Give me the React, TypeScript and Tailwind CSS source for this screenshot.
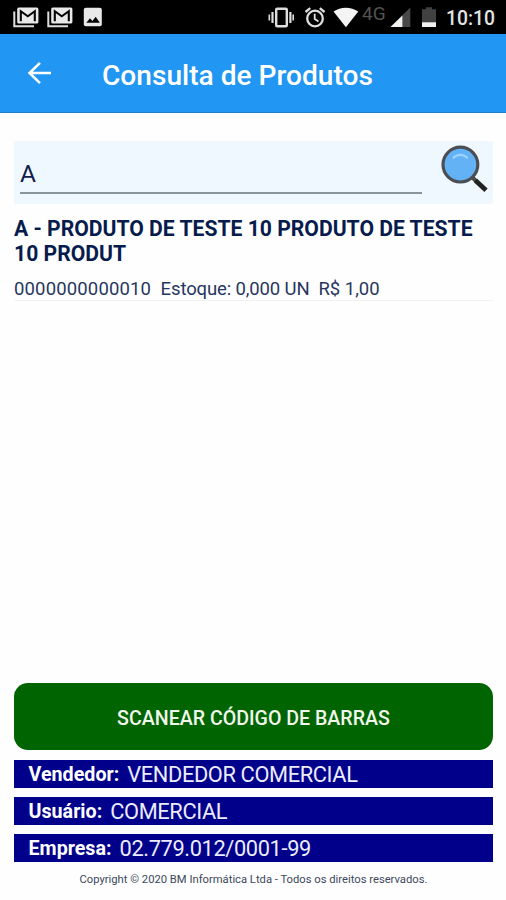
function MailStackIcon() {
  return (
    <svg className="h-[22px] w-[26px] shrink-0" viewBox="0 0 26 22" fill="none">
      <path d="M1.3 4.5V19.2H21" stroke="#dedede" strokeWidth="2" />
      <rect x="4.2" y="0.5" width="21.2" height="16" rx="1.6" fill="#e9e9e9" />
      <path d="M7.8 14.3V4.2L14.8 9.3L21.8 4.2V14.3" stroke="#050505" strokeWidth="2.1" />
    </svg>
  );
}

function StatusBar() {
  return (
    <div className="flex h-[34px] w-full items-start bg-black">
      <div className="flex pt-[7px] pl-[13px]">
        <MailStackIcon />
        <div className="w-[8px]" />
        <MailStackIcon />
        <svg className="ml-[10px] h-[20px] w-[20px]" viewBox="0 0 20 20">
          <rect x="0.8" y="0.8" width="18" height="18.4" rx="2" fill="#e9e9e9" />
          <path d="M3.3 15.8L7 11.3L9.4 14L12.7 9.8L16.8 15.8Z" fill="#050505" />
        </svg>
      </div>
      <div className="ml-auto flex h-[34px] items-start pr-[11px]">
        <svg className="mt-[7px] h-[21px] w-[28px]" viewBox="0 0 28 21" fill="none" stroke="#dedede">
          <rect x="10.2" y="1.8" width="10.6" height="17.4" rx="1" strokeWidth="2.4" />
          <path d="M6.5 5V16M24.4 5V16" strokeWidth="2.2" />
          <path d="M3.3 7.5V13.5M27.2 7.5V13.5" strokeWidth="1.6" />
        </svg>
        <svg className="mt-[7px] ml-[10px] h-[21px] w-[22px]" viewBox="0 0 22 21" fill="none" stroke="#dedede">
          <circle cx="11" cy="11.5" r="7.8" strokeWidth="2.3" />
          <path d="M1.5 5L6.2 1.1M20.5 5L15.8 1.1" strokeWidth="2.3" />
          <path d="M10.7 6.8V12L14.5 14.5" strokeWidth="1.8" />
        </svg>
        <svg className="mt-[7px] ml-[7px] h-[21px] w-[26px]" viewBox="0 0 26 21">
          <path d="M0.5 4.5C7.5 -0.6 18 -0.6 25.3 4.5L12.9 20.3Z" fill="#f4f4f4" />
        </svg>
        <div className="mt-[3px] ml-[3px] w-[26px] text-[19px] leading-[21px] text-[#525252]">4G</div>
        <svg className="mt-[7px] ml-[2px] h-[21px] w-[21px]" viewBox="0 0 21 21">
          <path d="M20.3 0.5V20H0.5Z" fill="#484848" />
          <path d="M12.4 8.4V20H0.5Z" fill="#f1f1f1" />
        </svg>
        <svg className="mt-[7px] ml-[10px] h-[21px] w-[16px]" viewBox="0 0 16 21">
          <path d="M1 2.2H5V0.3H11V2.2H15V16H1Z" fill="#414141" />
          <path d="M1 15.3H15V20H1Z" fill="#f1f1f1" />
        </svg>
        <div className="mt-[8px] ml-[7px] w-[51px] text-right text-[19.3px] leading-[22px] font-medium whitespace-nowrap text-[#e4e4e4]">
          10:10
        </div>
      </div>
    </div>
  );
}

function MagnifierIcon() {
  return (
    <svg className="mt-[4px] h-[50px] w-[50px]" viewBox="0 0 50 50" fill="none">
      <path d="M32 32L36.5 36.5" stroke="#4a4a4a" strokeWidth="4" />
      <path d="M35.5 35.5L46 45.2" stroke="#222" strokeWidth="4.8" />
      <circle cx="20.4" cy="19.6" r="17.4" fill="#62b2f5" stroke="#4b4e52" strokeWidth="3.2" />
      <path d="M12.8 13.2Q20.4 6.5 27.8 13.2" stroke="#9bd2fb" strokeWidth="2.4" />
    </svg>
  );
}

function InfoRow({ label, value }: { label: string; value: string }) {
  return (
    <div className="flex h-[28.5px] items-center bg-[#00008b] pl-[14.5px] whitespace-nowrap text-white">
      <span className="pt-[1.5px] text-[19.7px] leading-[28px] font-bold">{label}</span>
      <span className="pt-[1.5px] pl-[8px] text-[21.8px] leading-[28px] tracking-[-0.37px] text-[#ececff]">{value}</span>
    </div>
  );
}

export default function App() {
  return (
    <div className="flex h-[900px] w-[506px] flex-col overflow-hidden bg-[#fefefe] font-[Roboto,sans-serif]">
      <StatusBar />
      <header className="flex h-[78.5px] items-center border-b border-[#1d80cb] bg-[#2196f3] text-white">
        <svg className="ml-[27px] h-[24px] w-[25px]" viewBox="0 0 25 24" fill="none" stroke="white" strokeWidth="2.5">
          <path d="M24 12H2.5M13 1.8L2.5 12L13 22.2" />
        </svg>
        <h1 className="ml-[50px] pt-[6px] text-[28.1px] leading-[34px] font-medium whitespace-nowrap">Consulta de Produtos</h1>
      </header>
      <main className="flex flex-1 flex-col px-[14px] pt-[28.5px]">
        <div className="flex h-[63px] w-[479px] bg-[#f0f8ff]">
          <div className="ml-[6px] h-[52.5px] w-[402px] border-b-2 border-[#88959b] pt-[19px] text-[24.5px] leading-[28px] text-[#10204c]">
            A
          </div>
          <div className="ml-[18px]">
            <MagnifierIcon />
          </div>
        </div>
        <div className="h-[97px] w-[479px] border-b border-[#f2f2f2] pt-[13px] text-[#071c4d]">
          <div className="text-[21.15px] leading-[24.5px] font-bold whitespace-nowrap">
            A - PRODUTO DE TESTE 10 PRODUTO DE TESTE
            <br />
            10 PRODUT
          </div>
          <div className="mt-[11px] text-[18.5px] leading-[24px] whitespace-pre text-[#27365e]">
            <span className="tracking-[0.15px]">{"0000000000010  "}</span>
            <span className="tracking-[-0.13px]">{"Estoque: 0,000 UN  "}</span>
            <span>R$ 1,00</span>
          </div>
        </div>
        <button className="mt-auto h-[67px] w-[479px] shrink-0 rounded-[14px] bg-[#006400] pt-[4px] text-[19.6px] font-medium text-[#f2f7ec]">
          SCANEAR CÓDIGO DE BARRAS
        </button>
        <div className="mt-[9.5px] flex w-[479px] flex-col gap-[8.5px]">
          <InfoRow label="Vendedor:" value="VENDEDOR COMERCIAL" />
          <InfoRow label="Usuário:" value="COMERCIAL" />
          <InfoRow label="Empresa:" value="02.779.012/0001-99" />
        </div>
        <footer className="h-[38px] w-[479px] pt-[9.5px] text-center text-[11.22px] leading-[16px] text-[#3c485c]">
          Copyright © 2020 BM Informática Ltda - Todos os direitos reservados.
        </footer>
      </main>
    </div>
  );
}
